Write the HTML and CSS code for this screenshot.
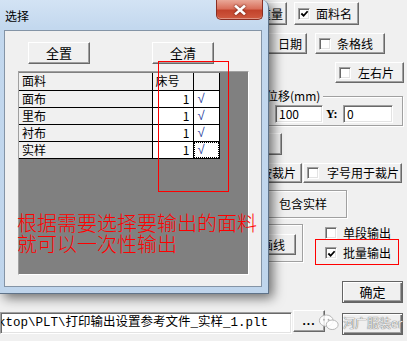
FILE: index.html
```html
<!DOCTYPE html>
<html lang="zh-CN">
<head>
  <meta charset="UTF-8">
  <title>选择</title>
  <link rel="stylesheet" href="styles.css">
</head>
<body>
  <div class="window">
    <div class="panel">
      <div class="row r1">
        <div class="btn b-weight">重量</div>
        <div class="btn chk-btn w-name">
          <span class="box"><svg viewBox="0 0 10 10"><path d="M1.5 5 L4 7.5 L8.5 2.5"/></svg></span>面料名
        </div>
      </div>
      <div class="row r2">
        <div class="btn b-date">日期</div>
        <div class="btn chk-btn w-grid"><span class="box"></span>条格线</div>
      </div>
      <div class="row r3">
        <div class="btn chk-btn w-lr"><span class="box"></span>左右片</div>
      </div>
      <div class="group offset">
        <span class="legend">位移(mm)</span>
        <div class="offset-row">
          <span class="field f-x">100</span>
          <span class="lbl">Y:</span>
          <span class="field f-y">0</span>
        </div>
      </div>
      <div class="btn b-small"></div>
      <div class="row r5">
        <div class="btn b-cut">按裁片</div>
        <div class="btn chk-btn w-font"><span class="box"></span>字号用于裁片</div>
      </div>
      <div class="group g-sample">包含实样</div>
      <div class="row r7">
        <div class="group g-line">
          <div class="btn b-line">画线</div>
        </div>
        <div class="checks">
          <div class="check"><span class="box"></span>单段输出</div>
          <div class="check second">
            <span class="box"><svg viewBox="0 0 10 10"><path d="M1.5 5 L4 7.5 L8.5 2.5"/></svg></span>批量输出
          </div>
        </div>
      </div>
      <div class="btn default ok">确定</div>
    </div>

    <div class="bottom">
      <div class="field path">ktop\PLT\打印输出设置参考文件_实样_1.plt</div>
      <div class="btn dots">...</div>
      <div class="btn default exit"></div>
    </div>

    <!-- annotation + watermark on top of the form -->
    <div class="mark mark-batch"></div>
    <div class="watermark">
      <svg class="wx" viewBox="0 0 24 20">
        <ellipse cx="9" cy="8" rx="7.5" ry="6.2"/>
        <ellipse cx="15.5" cy="12.5" rx="6.5" ry="5.2"/>
        <circle cx="6.5" cy="7" r="1"/>
        <circle cx="11.5" cy="7" r="1"/>
      </svg>
      <span>河广服装er</span>
    </div>
  </div>

  <div class="dialog">
    <div class="titlebar">
      <span class="title">选择</span>
      <div class="close">
        <svg viewBox="0 0 12 10"><path d="M2 1.5 L10 8.5 M10 1.5 L2 8.5"/></svg>
      </div>
    </div>
    <div class="client">
      <div class="actions">
        <div class="btn b-all">全置</div>
        <div class="btn b-clear">全清</div>
      </div>
      <div class="grid">
        <table class="list">
          <tr class="head">
            <td class="c-name">面料</td>
            <td class="c-num">床号</td>
            <td class="c-chk"></td>
          </tr>
          <tr>
            <td class="c-name">面布</td>
            <td class="c-num">1</td>
            <td class="c-chk">√</td>
          </tr>
          <tr>
            <td class="c-name">里布</td>
            <td class="c-num">1</td>
            <td class="c-chk">√</td>
          </tr>
          <tr>
            <td class="c-name">衬布</td>
            <td class="c-num">1</td>
            <td class="c-chk">√</td>
          </tr>
          <tr>
            <td class="c-name">实样</td>
            <td class="c-num">1</td>
            <td class="c-chk focus"><span>√</span></td>
          </tr>
        </table>
      </div>
    </div>
    <div class="mark mark-cols"></div>
    <div class="note">
      <div class="note-line">根据需要选择要输出的面料</div>
      <div class="note-line">就可以一次性输出</div>
    </div>
  </div>
</body>
</html>
```

FILE: styles.css
```css
body {
  margin: 0;
  width: 407px;
  height: 341px;
  overflow: hidden;
  background: #f0f0f0;
  font-family: "Noto Sans CJK SC", "DejaVu Sans", sans-serif;
  font-size: 12px;
  line-height: 14px;
  color: #000;
}

/* ---------- background form ---------- */
.window {
  position: relative;
  height: 341px;
  display: flex;
  flex-direction: column;
}
.panel {
  margin-left: 258px;
  padding-top: 2px;
  display: flex;
  flex-direction: column;
  align-items: flex-start;
}
.row {
  display: flex;
  align-items: flex-start;
}
.btn {
  box-sizing: border-box;
  height: 21px;
  display: flex;
  align-items: center;
  justify-content: center;
  background: #f0f0f0;
  border: 1px solid;
  border-color: #fff #696969 #696969 #fff;
  box-shadow: inset -1px -1px #a0a0a0;
  white-space: nowrap;
}
.btn.default {
  border: 1px solid #646464;
  box-shadow: inset 1px 1px #fff, inset -1px -1px #696969, inset -2px -2px #a0a0a0;
}
.chk-btn {
  justify-content: flex-start;
  padding-left: 3px;
  gap: 6px;
}
.box {
  box-sizing: border-box;
  width: 12px;
  height: 12px;
  flex: none;
  background: #fff;
  border: 1px solid;
  border-color: #a0a0a0 #fff #fff #a0a0a0;
  box-shadow: inset 1px 1px #696969, inset -1px -1px #e3e3e3;
  display: flex;
  align-items: center;
  justify-content: center;
}
.box svg {
  width: 9px;
  height: 9px;
  fill: none;
  stroke: #000;
  stroke-width: 2;
}

.r1 { height: 23px; }
.r1 .btn { height: 23px; }
.b-weight { width: 29px; justify-content: flex-end; padding-right: 3px; }
.w-name { width: 65px; margin-left: 7px; }

.r2 { margin-top: 8px; }
.b-date { width: 49px; justify-content: flex-end; padding-right: 4px; }
.w-grid { width: 70px; margin-left: 8px; }

.r3 { margin-top: 8px; }
.w-lr { width: 69px; margin-left: 77px; gap: 7px; }

.group {
  box-sizing: border-box;
  border: 1px solid #a0a0a0;
  box-shadow: inset 1px 1px #fff, 1px 1px #fff;
}
.offset {
  width: 145px;
  height: 30px;
  margin-top: 13px;
}
.legend {
  display: block;
  width: fit-content;
  margin: -8px 0 0 6px;
  padding: 0 3px 0 1px;
  background: #f0f0f0;
}
.offset-row {
  display: flex;
  align-items: center;
  margin: 2px 0 0 16px;
}
.field {
  box-sizing: border-box;
  height: 18px;
  display: flex;
  align-items: center;
  padding-left: 3px;
  background: #fff;
  border: 1px solid;
  border-color: #a0a0a0 #fff #fff #a0a0a0;
  box-shadow: inset 1px 1px #696969, inset -1px -1px #e3e3e3;
}
.f-x { width: 48px; }
.f-y { width: 50px; }
.lbl {
  width: 20px;
  padding-left: 3px;
  box-sizing: border-box;
  font-family: "Liberation Serif", serif;
  font-weight: bold;
}

.b-small { width: 24px; height: 22px; margin-top: 7px; }

.r5 { margin-top: 8px; }
.r5 .btn { height: 20px; }
.b-cut { width: 44px; justify-content: flex-end; padding-right: 5px; }
.w-font { width: 99px; margin-left: 1px; gap: 8px; }

.g-sample {
  width: 89px;
  height: 28px;
  margin-top: 7px;
  padding-left: 20px;
  display: flex;
  align-items: center;
}

.r7 { margin-top: 6px; }
.g-line {
  width: 45px;
  height: 38px;
  padding-top: 9px;
}
.b-line {
  width: 37px;
  justify-content: flex-end;
  padding-right: 10px;
}
.checks {
  margin: 2px 0 0 22px;
}
.check {
  display: flex;
  align-items: center;
  gap: 6px;
  height: 14px;
}
.check.second { margin-top: 6px; }

.ok {
  width: 61px;
  height: 22px;
  margin: 19px 0 0 84px;
  font-size: 13px;
}

.bottom {
  display: flex;
  align-items: flex-start;
  margin-top: 7px;
}
.path {
  width: 292px;
  height: 22px;
  margin-top: 2px;
  justify-content: flex-end;
  padding: 0 23px 0 0;
  overflow: hidden;
  white-space: nowrap;
  font-family: "Liberation Mono", "Noto Sans CJK SC", monospace;
  font-size: 12.5px;
}
.dots {
  width: 32px;
  height: 22px;
  margin-left: 1px;
  font-family: "Liberation Sans", sans-serif;
  font-weight: bold;
  letter-spacing: 1px;
}
.exit {
  width: 61px;
  height: 22px;
  margin: 3px 0 0 17px;
}

.mark {
  position: absolute;
  box-sizing: border-box;
  border: 1px solid #ff0000;
}
.mark-batch {
  left: 315px;
  top: 239px;
  width: 84px;
  height: 26px;
}
.watermark {
  position: absolute;
  left: 318px;
  top: 313px;
  display: flex;
  align-items: center;
  gap: 3px;
  color: #ececec;
  font-size: 12px;
  text-shadow: 0 0 1px #6e6e6e, 0 0 1px #6e6e6e;
}
.wx {
  width: 22px;
  height: 19px;
  fill: rgba(255, 255, 255, 0.85);
  stroke: #b0b0b0;
  stroke-width: 1;
}
.wx circle { fill: #b0b0b0; stroke: none; }

/* ---------- dialog ---------- */
.dialog {
  position: absolute;
  left: 0;
  top: 0;
  box-sizing: border-box;
  width: 269px;
  height: 294px;
  display: flex;
  flex-direction: column;
  background: linear-gradient(180deg, #d3e3f4 0, #c3d8ee 28px, #bfd5ec 100%);
  border-right: 1px solid #5f7389;
  border-bottom: 1px solid #5f7389;
  border-top-right-radius: 7px;
  box-shadow: 4px 4px 12px rgba(0, 0, 0, 0.55);
}
.titlebar {
  height: 30px;
  display: flex;
  justify-content: space-between;
  align-items: flex-start;
}
.title {
  padding: 9px 0 0 5px;
  line-height: 14px;
}
.close {
  box-sizing: border-box;
  width: 47px;
  height: 20px;
  margin-right: 5px;
  display: flex;
  align-items: center;
  justify-content: center;
  background: linear-gradient(180deg, #e9a898 0, #d9705c 45%, #c2432c 55%, #cf5a40 100%);
  border: 1px solid #8a2e22;
  border-top: none;
  border-radius: 0 0 5px 5px;
  box-shadow: inset 0 -1px rgba(255, 255, 255, 0.35);
}
.close svg {
  width: 12px;
  height: 10px;
  fill: none;
  stroke: #fff;
  stroke-width: 2.6;
  stroke-linecap: square;
  filter: drop-shadow(0 0 1px #5a1a10);
}
.client {
  flex: 1;
  margin: 0 6px 6px 4px;
  background: #f0f0f0;
  border: 1px solid #8494a6;
  display: flex;
  flex-direction: column;
}
.actions {
  display: flex;
  margin: 11px 0 0 23px;
  gap: 62px;
}
.actions .btn {
  width: 62px;
  height: 22px;
  font-size: 13px;
}
.grid {
  flex: 1;
  margin: 7px 12px 11px 13px;
  padding-top: 1px;
  background: #808080;
  border: 1px solid;
  border-color: #a0a0a0 #fff #fff #a0a0a0;
}
.list {
  border-collapse: collapse;
  table-layout: fixed;
  width: 200px;
}
.list td {
  box-sizing: border-box;
  height: 17px;
  padding: 0;
  border-right: 1px solid #000;
  border-bottom: 1px solid #000;
  background: #fff;
  white-space: nowrap;
}
.list .head td { height: 17px; background: #f0f0f0; }
.c-name {
  width: 133px;
  padding-left: 3px !important;
  background: #f0f0f0 !important;
}
.c-num {
  width: 41px;
  text-align: right;
  padding-right: 3px !important;
}
.head .c-num { text-align: left; padding-left: 3px !important; }
.c-chk {
  width: 26px;
  padding-left: 4px !important;
  color: #1f3c9c;
  font-family: "Liberation Sans", sans-serif;
  font-size: 13px;
}
.c-chk.focus { padding: 0 !important; }
.c-chk.focus span {
  display: block;
  margin: 1px;
  height: 14px;
  padding-left: 3px;
  outline: 1px dotted #000;
  outline-offset: 0;
}
.mark-cols {
  left: 158px;
  top: 61px;
  width: 71px;
  height: 131px;
}
.note {
  position: absolute;
  left: 17px;
  top: 212px;
  color: #ff0000;
  font-size: 20px;
  font-weight: 300;
  white-space: nowrap;
}
.note-line {
  height: 21px;
  line-height: 21px;
}
```
